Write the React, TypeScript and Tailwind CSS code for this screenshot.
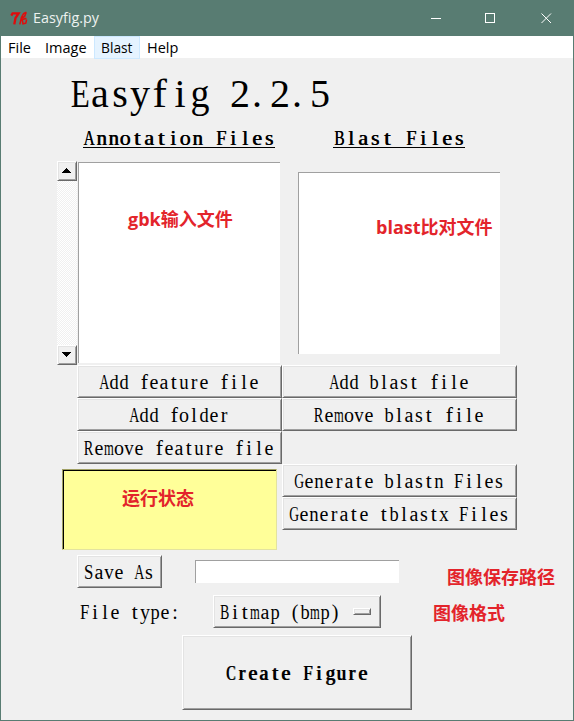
import type { ReactNode } from 'react';

// Horizontal fit of each letter inside its fixed-width cell.
const fit: Record<string, string> = {
  A: 'scale-x-[.7]', B: 'scale-x-[.7]', C: 'scale-x-[.7]', E: 'scale-x-[.78]',
  F: 'scale-x-[.84]', G: 'scale-x-[.68]', R: 'scale-x-[.72]', S: 'scale-x-[.84]',
  m: 'scale-x-[.63]', n: 'scale-x-[.94]', u: 'scale-x-[.94]', d: 'scale-x-[.92]',
  b: 'scale-x-[.92]', p: 'scale-x-[.92]', g: 'scale-x-[.95]', v: 'scale-x-[.94]',
  x: 'scale-x-[.94]', f: 'scale-x-[1.08]', t: 'scale-x-[1.08]',
};

function Mono({ text, cell }: { text: string; cell: string }) {
  return (
    <span className="flex whitespace-pre">
      {text.split('').map((c, i) => (
        <span key={i} className={`flex shrink-0 ${c === '.' ? 'justify-start pl-[2px]' : 'justify-center'} ${cell}`}>
          <span className={`inline-block ${fit[c] ?? ''}`}>{c}</span>
        </span>
      ))}
    </span>
  );
}

const raised =
  'border border-t-white border-l-white border-r-[#696969] border-b-[#696969] shadow-[inset_1px_1px_0_#e3e3e3,inset_-1px_-1px_0_#a0a0a0] bg-[#f0f0f0]';

function Button({ text, className = '' }: { text: string; className?: string }) {
  return (
    <button className={`flex h-[33px] shrink-0 items-center justify-center pt-px pr-px text-[20px] leading-[22px] ${raised} ${className}`}>
      <Mono text={text} cell="w-[10px]" />
    </button>
  );
}

function Heading({ text, className }: { text: string; className: string }) {
  return (
    <h2 className={`h-[21px] w-fit border-b border-black text-[22px] leading-[21px] [text-shadow:.6px_0_0_#000] ${className}`}>
      <Mono text={text} cell="w-[12px]" />
    </h2>
  );
}

function Note({ children, className }: { children: ReactNode; className: string }) {
  return (
    <span className={`absolute whitespace-nowrap font-['Open_Sans','Noto_Sans_CJK_SC',sans-serif] text-[18px] leading-[24px] font-bold text-[#e3242b] ${className}`}>
      {children}
    </span>
  );
}

function Arrow({ down = false }: { down?: boolean }) {
  return (
    <button className={`flex size-5 items-center justify-center pr-px pb-px ${raised}`}>
      <svg width="9" height="5" viewBox="0 0 9 5" shapeRendering="crispEdges" className={down ? 'rotate-180' : ''}>
        <path d="M4 0h1v1h1v1h1v1h1v1h1v1H0V4h1V3h1V2h1V1h1z" />
      </svg>
    </button>
  );
}

export default function App() {
  return (
    <div className="flex h-[721px] w-[574px] flex-col overflow-hidden border border-t-0 border-[#587c72] bg-[#f0f0f0] font-['Liberation_Serif',serif] text-black">
      <header className="flex h-9 shrink-0 items-center bg-[#587c72] font-['Open_Sans',sans-serif] text-white">
        <svg width="18" height="15" viewBox="0 0 18 15" className="ml-[9px] mt-px" fill="none" stroke="#e00b0b">
          <path d="M1.300 4.600 2.600 2.300H8.600L5.500 7 4.300 13.400" strokeWidth="2.300" />
          <path d="M16.400 1.200 13.600 2.600 11.400 6.500 9.800 13.400M10.800 9 16.400 7.200M12.300 9 13 12.800 15.800 12.200 16.600 8.500M16.200 1.400 14.600 5.400 12 7" strokeWidth="1.500" />
        </svg>
        <span className="ml-[5px] origin-left scale-x-[.99] text-[14.5px] text-[#edf2f0]">Easyfig.py</span>
        <svg width="122" height="12" viewBox="0 0 122 12" className="mr-5 ml-auto shrink-0" fill="none" stroke="white">
          <path d="M0 6.500h10M54.500 1.500h9v9h-9z" shapeRendering="crispEdges" />
          <path d="m110.500 1.500 9.500 9.500m0-9.500-9.500 9.500" />
        </svg>
      </header>
      <nav className="flex h-[22px] shrink-0 bg-white font-['Open_Sans',sans-serif] text-[14.5px] leading-[23px]">
        <span className="w-9 pl-[7px]">File</span>
        <span className="w-[57px] pl-2">Image</span>
        <span className="h-[23px] w-[46px] border border-[#cce8ff] bg-[#e5f3ff] pl-[6px] leading-[21px]"><span className="inline-block origin-left scale-x-[.95]">Blast</span></span>
        <span className="pl-[7px]">Help</span>
      </nav>
      <main className="flex grow flex-col">
        <h1 className="mt-[14px] ml-[69px] text-[40px] leading-[44px]">
          <Mono text="Easyfig 2.2.5" cell="w-[20px]" />
        </h1>
        <div className="mt-[11px] ml-[56px] flex">
          <section className="w-[225px]">
            <Heading text="Annotation Files" className="ml-[26px]" />
            <div className="mt-[13px] flex h-[204px]">
              <div className="flex w-5 flex-col justify-between bg-[repeating-conic-gradient(#f0f0f0_0_25%,#fff_0_50%)] bg-[length:2px_2px]">
                <Arrow />
                <Arrow down />
              </div>
              <div className="relative mt-px ml-px h-[201px] w-[202px] border-t border-l border-[#a0a0a0] bg-white">
                <Note className="top-[44px] left-[49px]">gbk输入文件</Note>
              </div>
            </div>
            <div className="ml-5 flex flex-col">
              <Button text="Add feature file" />
              <Button text="Add folder" />
              <Button text="Remove feature file" />
            </div>
            <div className="relative mt-[5px] ml-[5px] h-[81px] w-[215px] border border-t-[#a0a064] border-r-[#e3e3a0] border-b-[#e3e3a0] border-l-[#a0a064] bg-[#ffff99] shadow-[inset_1px_1px_0_#000]">
              <Note className="top-[16px] left-[59px]">运行状态</Note>
            </div>
          </section>
          <section className="w-[235px]">
            <Heading text="Blast Files" className="ml-[51px]" />
            <div className="relative mt-6 ml-4 h-[182px] w-[202px] border-t border-l border-[#a0a0a0] bg-white">
              <Note className="top-[42px] left-[77px]">blast比对文件</Note>
            </div>
            <div className="mt-[11px] flex flex-col">
              <Button text="Add blast file" />
              <Button text="Remove blast file" />
              <Button text="Generate blastn Files" className="mt-[33px]" />
              <Button text="Generate tblastx Files" />
            </div>
          </section>
        </div>
        <div className="relative mt-[5px] ml-[76px] flex h-[33px]">
          <Button text="Save As" className="w-[85px]" />
          <input aria-label="Save path" className="mt-[5px] ml-[33px] h-[23px] w-[204px] border-t border-l border-[#a0a0a0] bg-white" />
          <Note className="top-[10px] left-[370px]">图像保存路径</Note>
        </div>
        <div className="relative mt-[7px] ml-[79px] flex h-[33px] items-center text-[20px] leading-[22px]">
          <Mono text="File type:" cell="w-[10px]" />
          <button className={`ml-[33px] flex h-[33px] w-[168px] items-center pt-px pl-[6px] ${raised}`}>
            <Mono text="Bitmap (bmp)" cell="w-[10px]" />
            <span className={`mb-[2px] ml-[13px] h-[7px] w-[18px] shrink-0 ${raised}`} />
          </button>
          <Note className="top-[6px] left-[353px]">图像格式</Note>
        </div>
        <button className={`mt-[7px] ml-[181px] flex h-[75px] w-[230px] items-center justify-center pr-px text-[20px] leading-[22px] [text-shadow:1px_0_0_#000] ${raised}`}>
          <Mono text="Create Figure" cell="w-[11px]" />
        </button>
      </main>
    </div>
  );
}
